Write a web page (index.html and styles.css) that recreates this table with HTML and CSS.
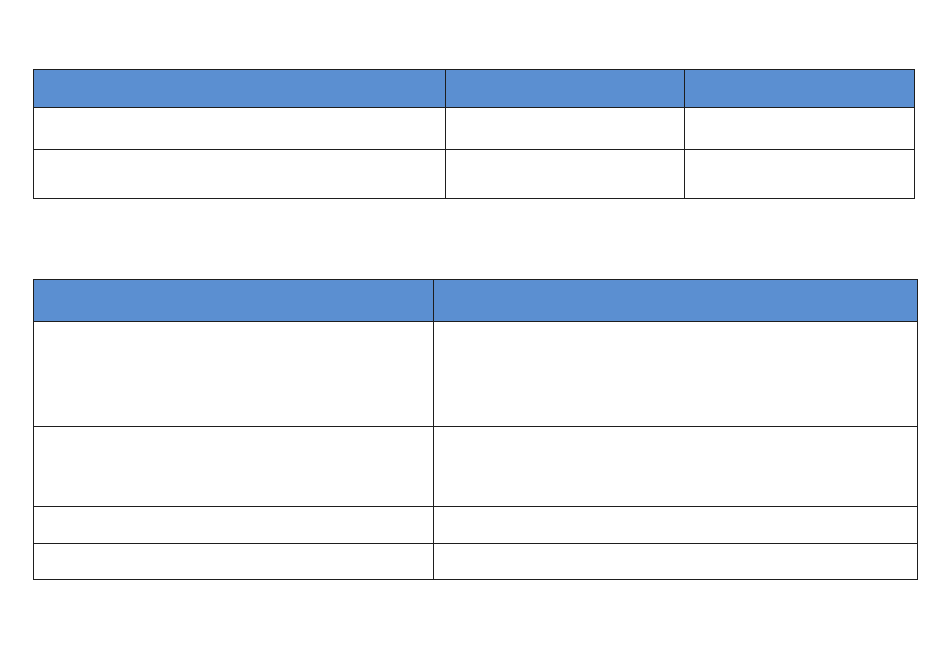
FILE: index.html
```html
<!DOCTYPE html>
<html lang="en">
<head>
<meta charset="utf-8">
<title>Tables</title>
<link rel="stylesheet" href="styles.css">
</head>
<body>
<main class="page">
  <div class="grid grid-one" role="table">
    <div class="cell head"></div><div class="cell head"></div><div class="cell head"></div>
    <div class="cell"></div><div class="cell"></div><div class="cell"></div>
    <div class="cell"></div><div class="cell"></div><div class="cell"></div>
  </div>
  <div class="grid grid-two" role="table">
    <div class="cell head"></div><div class="cell head"></div>
    <div class="cell"></div><div class="cell"></div>
    <div class="cell"></div><div class="cell"></div>
    <div class="cell"></div><div class="cell"></div>
    <div class="cell"></div><div class="cell"></div>
  </div>
</main>
</body>
</html>
```
FILE: styles.css
```css
html, body {
  margin: 0;
  padding: 0;
  background: #ffffff;
  font-family: "Liberation Sans", Arial, sans-serif;
}

.page {
  display: flex;
  flex-direction: column;
  align-items: flex-start;
  gap: 80px;
  padding: 69px 0 0 33px;
}

.grid {
  display: grid;
  gap: 1px;
  padding: 1px;
  background: #1e1e1e;
}

.grid-one {
  grid-template-columns: 411px 238px 229px;
  grid-template-rows: 37px 41px 48px;
}

.grid-two {
  grid-template-columns: 399px 483px;
  grid-template-rows: 41px 104px 79px 36px 35px;
}

.cell {
  background: #ffffff;
}

.cell.head {
  background: #5b8fd1;
}
```
